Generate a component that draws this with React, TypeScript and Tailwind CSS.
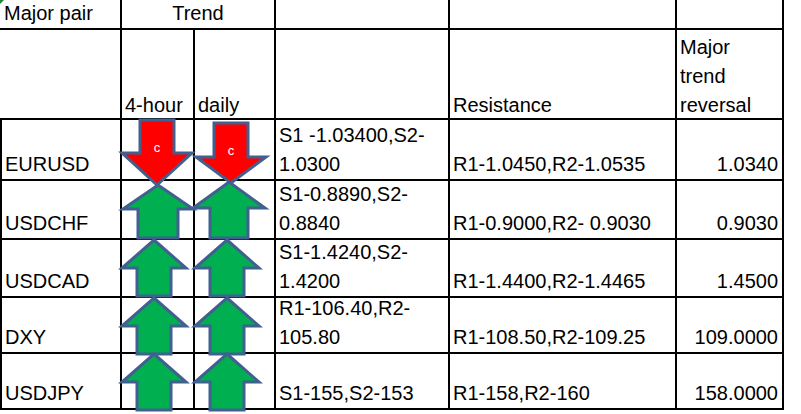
import React from "react";

const B = "border-black border-r-2 border-b-2 px-[3px] flex flex-col justify-end leading-[29px] whitespace-nowrap";

type Row = { pair: string; s: string[]; r: string; m: string };

const rows: Row[] = [
  { pair: "EURUSD", s: ["S1 -1.03400,S2-", "1.0300"], r: "R1-1.0450,R2-1.0535", m: "1.0340" },
  { pair: "USDCHF", s: ["S1-0.8890,S2-", "0.8840"], r: "R1-0.9000,R2- 0.9030", m: "0.9030" },
  { pair: "USDCAD", s: ["S1-1.4240,S2-", "1.4200"], r: "R1-1.4400,R2-1.4465", m: "1.4500" },
  { pair: "DXY", s: ["R1-106.40,R2-", "105.80"], r: "R1-108.50,R2-109.25", m: "109.0000" },
  { pair: "USDJPY", s: ["S1-155,S2-153"], r: "R1-158,R2-160", m: "158.0000" },
];

function Down({ cx, top, headY, tip, hw, sw }: { cx: number; top: number; headY: number; tip: number; hw: number; sw: number }) {
  const pts = [
    [cx - sw, top],
    [cx + sw, top],
    [cx + sw, headY],
    [cx + hw, headY],
    [cx, tip],
    [cx - hw, headY],
    [cx - sw, headY],
  ]
    .map((p) => p.join(","))
    .join(" ");
  return <polygon points={pts} fill="#ff0000" stroke="#41608f" strokeWidth={3} strokeLinejoin="miter" />;
}

function Up({ cx, tip, headY, bottom, hw, sw }: { cx: number; tip: number; headY: number; bottom: number; hw: number; sw: number }) {
  const pts = [
    [cx, tip],
    [cx + hw, headY],
    [cx + sw, headY],
    [cx + sw, bottom],
    [cx - sw, bottom],
    [cx - sw, headY],
    [cx - hw, headY],
  ]
    .map((p) => p.join(","))
    .join(" ");
  return <polygon points={pts} fill="#00b050" stroke="#41608f" strokeWidth={3} strokeLinejoin="miter" />;
}

export default function App() {
  return (
    <div className="relative w-[801px] h-[414px] bg-white text-black text-[20px] overflow-hidden" style={{ fontFamily: '"Liberation Sans", Arial, sans-serif' }}>
      <div className="grid grid-cols-[122px_73px_81px_174px_227px_107px] grid-rows-[30px_90px_61px_59px_58px_56px_56px] w-[784px]">
        {/* header row 1 */}
        <div className={B}><span className="leading-[30px] pl-[1px]">Major pair</span></div>
        <div className={`${B} col-span-2 items-center`}><span className="leading-[30px]">Trend</span></div>
        <div className={B}></div>
        <div className={B}></div>
        <div className={B}></div>
        {/* header row 2 */}
        <div className={B}></div>
        <div className={B}><span className="-mb-[2px]">4-hour</span></div>
        <div className={B}><span className="-mb-[2px]">daily</span></div>
        <div className={B}></div>
        <div className={B}><span className="-mb-[2px]">Resistance</span></div>
        <div className={B}>
          <div className="flex flex-col -mb-[2px]">
            <span>Major</span>
            <span>trend</span>
            <span>reversal</span>
          </div>
        </div>
        {rows.map((r) => (
          <React.Fragment key={r.pair}>
            <div className={`${B} border-l-2`}>{r.pair}</div>
            <div className={B}></div>
            <div className={B}></div>
            <div className={B}>
              {r.s.map((t) => (
                <span key={t}>{t}</span>
              ))}
            </div>
            <div className={B}>{r.r}</div>
            <div className={`${B} items-end pr-[4px]`}>{r.m}</div>
          </React.Fragment>
        ))}
      </div>

      <svg className="absolute left-0 top-0 pointer-events-none" width="801" height="414" viewBox="0 0 801 414">
        <polygon points="0,0 4,0 0,4" fill="#1a8a3a" />
        {/* USDCHF greens (drawn first, under reds) */}
        <Up cx={158} tip={185} headY={209} bottom={238} hw={35} sw={20} />
        <Up cx={229} tip={182} headY={208} bottom={238} hw={36} sw={19} />
        {/* EURUSD reds */}
        <Down cx={157} top={120} headY={153} tip={185} hw={35} sw={17} />
        <Down cx={231} top={123} headY={157} tip={183} hw={35} sw={17} />
        <text x={157} y={152} fill="#ffffff" fontSize="13" textAnchor="middle" style={{ fontFamily: '"Liberation Sans", Arial, sans-serif' }}>c</text>
        <text x={231} y={155} fill="#ffffff" fontSize="13" textAnchor="middle" style={{ fontFamily: '"Liberation Sans", Arial, sans-serif' }}>c</text>
        {/* USDCAD, DXY, USDJPY */}
        {[240, 298, 354].map((t) => (
          <React.Fragment key={t}>
            <Up cx={154} tip={t} headY={t + 28} bottom={t + 56} hw={32} sw={17} />
            <Up cx={227} tip={t} headY={t + 28} bottom={t + 56} hw={32} sw={17} />
          </React.Fragment>
        ))}
      </svg>
    </div>
  );
}
